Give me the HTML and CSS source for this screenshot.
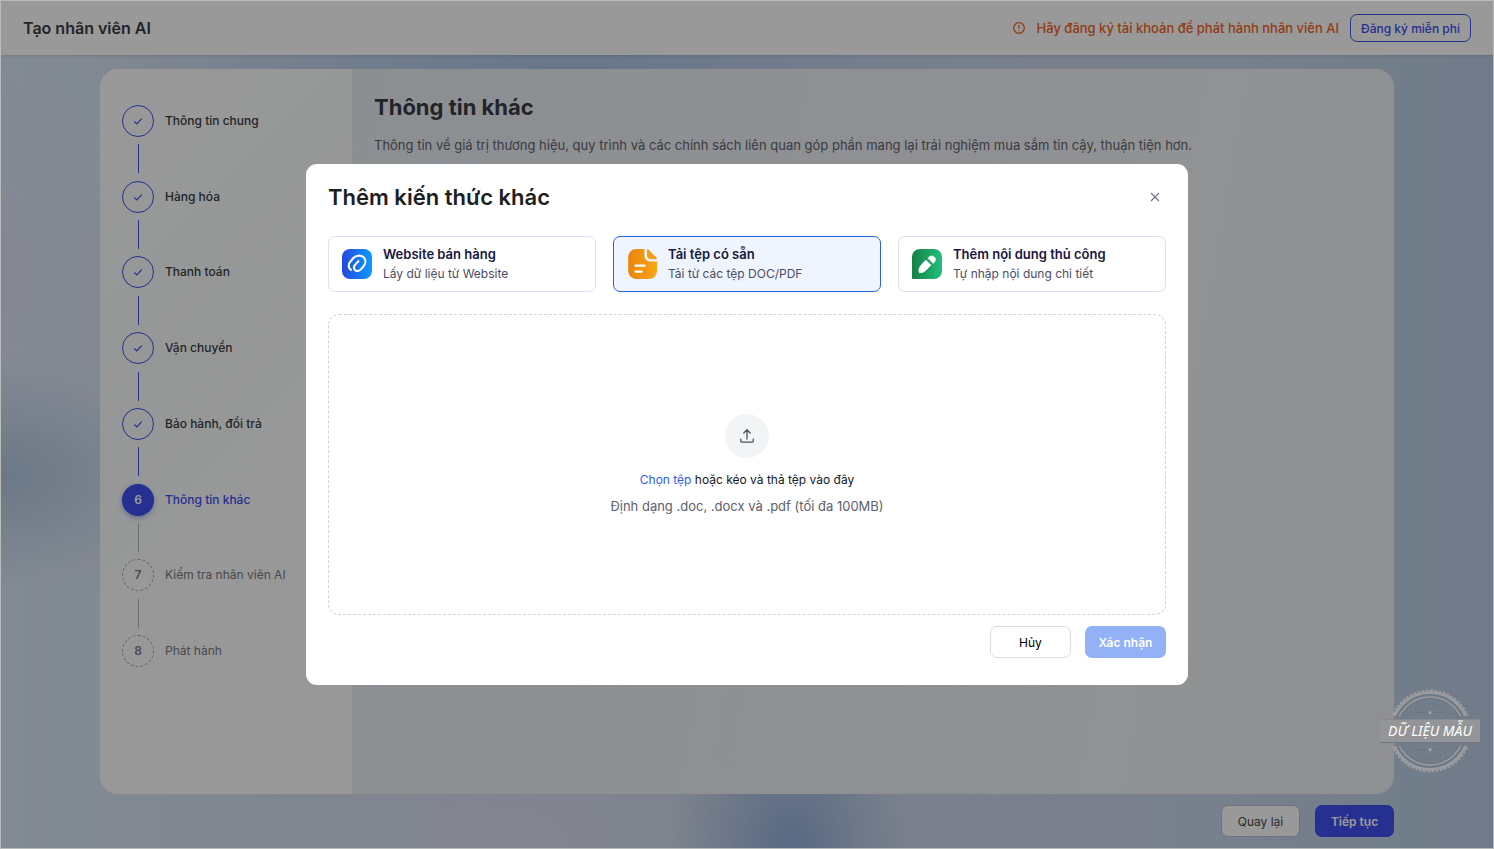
FILE: index.html
```html
<!DOCTYPE html>
<html lang="vi">
<head>
  <meta charset="UTF-8">
  <meta name="viewport" content="width=device-width, initial-scale=1">
  <title>Tạo nhân viên AI</title>
  <link rel="stylesheet" href="styles.css">
</head>
<body>
  <header class="topbar">
    <h1 class="topbar-title">Tạo nhân viên AI</h1>
    <div class="topbar-right">
      <svg class="warn-icon" viewBox="0 0 14 14" width="14" height="14">
        <circle cx="7" cy="7" r="5.3"/>
        <path d="M7 4v3.6M7 9.1v1"/>
      </svg>
      <span class="topbar-note">Hãy đăng ký tài khoản để phát hành nhân viên AI</span>
      <button type="button" class="btn-register">Đăng ký miễn phí</button>
    </div>
  </header>

  <main class="page">
    <div class="wizard">
      <nav class="sidebar">
        <ol class="steps">
          <li class="step done">
            <span class="step-dot"><svg viewBox="0 0 12 12" width="12" height="12"><path d="M2.2 6.4 4.8 8.8 9.8 3.6"/></svg></span>
            <a href="#" class="step-label">Thông tin chung</a>
          </li>
          <li class="step done">
            <span class="step-dot"><svg viewBox="0 0 12 12" width="12" height="12"><path d="M2.2 6.4 4.8 8.8 9.8 3.6"/></svg></span>
            <a href="#" class="step-label">Hàng hóa</a>
          </li>
          <li class="step done">
            <span class="step-dot"><svg viewBox="0 0 12 12" width="12" height="12"><path d="M2.2 6.4 4.8 8.8 9.8 3.6"/></svg></span>
            <a href="#" class="step-label">Thanh toán</a>
          </li>
          <li class="step done">
            <span class="step-dot"><svg viewBox="0 0 12 12" width="12" height="12"><path d="M2.2 6.4 4.8 8.8 9.8 3.6"/></svg></span>
            <a href="#" class="step-label">Vận chuyển</a>
          </li>
          <li class="step done">
            <span class="step-dot"><svg viewBox="0 0 12 12" width="12" height="12"><path d="M2.2 6.4 4.8 8.8 9.8 3.6"/></svg></span>
            <a href="#" class="step-label">Bảo hành, đổi trả</a>
          </li>
          <li class="step active">
            <span class="step-dot">6</span>
            <a href="#" class="step-label">Thông tin khác</a>
          </li>
          <li class="step">
            <span class="step-dot">7</span>
            <a href="#" class="step-label">Kiểm tra nhân viên AI</a>
          </li>
          <li class="step">
            <span class="step-dot">8</span>
            <a href="#" class="step-label">Phát hành</a>
          </li>
        </ol>
      </nav>
      <section class="content">
        <h2>Thông tin khác</h2>
        <p>Thông tin về giá trị thương hiệu, quy trình và các chính sách liên quan góp phần mang lại trải nghiệm mua sắm tin cậy, thuận tiện hơn.</p>
      </section>
    </div>
    <div class="page-actions">
      <button type="button" class="btn btn-back">Quay lại</button>
      <button type="button" class="btn btn-next">Tiếp tục</button>
    </div>
  </main>

  <div class="overlay">
    <div class="modal" role="dialog" aria-labelledby="modal-title">
      <div class="modal-header">
        <h2 id="modal-title">Thêm kiến thức khác</h2>
        <button type="button" class="modal-close" aria-label="Đóng">
          <svg viewBox="0 0 10 10" width="10" height="10"><path d="M1 1 9 9M9 1 1 9"/></svg>
        </button>
      </div>

      <div class="options">
        <button type="button" class="option">
          <svg class="option-icon" viewBox="0 0 30 30" width="30" height="30">
            <defs>
              <linearGradient id="blue" x1="0" y1="0" x2="1" y2="0">
                <stop offset="0" stop-color="#2547dd"/>
                <stop offset="1" stop-color="#0b9bff"/>
              </linearGradient>
            </defs>
            <rect width="30" height="30" rx="8" fill="url(#blue)"/>
            <path d="M9 20.8C6.4 19.4 6 15.6 8 13.2L11.2 9.2C13.6 6.4 18.8 5.6 21.6 8.2 24.2 10.8 23.8 14.6 21.6 17.2L18.8 20.4C17 22.4 14 22.6 12.6 20.6 11.4 18.8 12 17 13.2 15.6L16.4 12.2" fill="none" stroke="#fff" stroke-width="2.1" stroke-linecap="round" stroke-linejoin="round"/>
          </svg>
          <span class="option-text">
            <span class="option-title">Website bán hàng</span>
            <span class="option-sub">Lấy dữ liệu từ Website</span>
          </span>
        </button>
        <button type="button" class="option selected" aria-pressed="true">
          <svg class="option-icon" viewBox="0 0 30 30" width="30" height="30">
            <defs>
              <linearGradient id="orange" x1="0" y1="0" x2="1" y2="0">
                <stop offset="0" stop-color="#e8850c"/>
                <stop offset="1" stop-color="#fba518"/>
              </linearGradient>
            </defs>
            <path d="M9.5 0H17.5V6.5C17.5 10 20 12.5 23.5 12.5H30V22A8 8 0 0 1 22 30H9.5A8 8 0 0 1 1.2 22V8A8 8 0 0 1 9.5 0Z" fill="url(#orange)"/>
            <path d="M20 .6C20 0 20.8-.2 21.4.4L29.6 8.8C30.2 9.6 29.8 10.2 29 10.2H24C21.6 10.2 20 8.6 20 6.2Z" fill="#f69c16"/>
            <path d="M8.4 16.6H17.4M8.4 22.6H14.6" stroke="#fff" stroke-width="2.3" stroke-linecap="round"/>
          </svg>
          <span class="option-text">
            <span class="option-title">Tải tệp có sẵn</span>
            <span class="option-sub">Tải từ các tệp DOC/PDF</span>
          </span>
        </button>
        <button type="button" class="option">
          <svg class="option-icon" viewBox="0 0 30 30" width="30" height="30">
            <defs>
              <linearGradient id="green" x1="0" y1="0" x2="1" y2="0">
                <stop offset="0" stop-color="#148145"/>
                <stop offset="1" stop-color="#22c07b"/>
              </linearGradient>
            </defs>
            <path d="M8 0H22A8 8 0 0 1 30 8V22A8 8 0 0 1 22 30H1A1 1 0 0 1 0 29V8A8 8 0 0 1 8 0Z" fill="url(#green)"/>
            <path d="M13.8 11.2 18.8 16.2 13 22C11 23.4 8.6 23.8 7.4 23.4 6.6 21.8 7 19.2 8.6 17Z" fill="#fff" stroke="#fff" stroke-linejoin="round"/>
            <path d="M16 9.2C17.6 6.8 20.6 6.2 22.4 8 24.2 9.8 23.6 12.8 21.2 14.4Z" fill="#fff" stroke="#fff" stroke-width=".6" stroke-linejoin="round"/>
          </svg>
          <span class="option-text">
            <span class="option-title">Thêm nội dung thủ công</span>
            <span class="option-sub">Tự nhập nội dung chi tiết</span>
          </span>
        </button>
      </div>

      <div class="dropzone">
        <span class="upload-icon">
          <svg viewBox="0 0 16 16" width="16" height="16"><path d="M8 11V2M4.8 5 8 1.8 11.2 5M1.8 11.2V13.2Q1.8 14.2 2.8 14.2H13.2Q14.2 14.2 14.2 13.2V11.2"/></svg>
        </span>
        <p class="drop-main"><a href="#">Chọn tệp</a> hoặc kéo và thả tệp vào đây</p>
        <p class="drop-hint">Định dạng .doc, .docx và .pdf (tối đa 100MB)</p>
      </div>

      <div class="modal-actions">
        <button type="button" class="btn btn-cancel">Hủy</button>
        <button type="button" class="btn btn-confirm">Xác nhận</button>
      </div>
    </div>
  </div>

  <div class="stamp">
    <svg class="stamp-seal" viewBox="0 0 86 86" width="86" height="86">
      <defs>
        <clipPath id="seal-halves">
          <path d="M0 0H86V28H0ZM0 58H86V86H0Z"/>
        </clipPath>
      </defs>
      <g clip-path="url(#seal-halves)">
        <g fill="none" stroke="#999b9e">
          <circle cx="43" cy="43" r="38.5" stroke-width="3"/>
          <circle cx="43" cy="43" r="40.5" stroke-width="2" stroke-dasharray="2.6 1.64"/>
          <circle cx="43" cy="43" r="34" stroke-width="1.6"/>
          <circle cx="43" cy="43" r="27" stroke="#697079" stroke-width="1.4" stroke-dasharray="1.4 3.6"/>
        </g>
        <circle cx="43" cy="43" r="36.4" fill="none" stroke="#6b727b" stroke-width=".7"/>
        <circle cx="43" cy="43" r="32.4" fill="none" stroke="#6b727b" stroke-width=".7"/>
        <path d="M30 24.5H39M47 24.5H56M30 61.5H39M47 61.5H56" stroke="#6b727b"/>
        <circle cx="43" cy="24.5" r="1.5" fill="#a5a7aa"/>
        <circle cx="43" cy="61.5" r="1.5" fill="#a5a7aa"/>
      </g>
    </svg>
    <span class="stamp-ribbon">DỮ LIỆU MẪU</span>
  </div>
</body>
</html>
```
FILE: styles.css
```css
* {
  box-sizing: border-box;
}

body {
  margin: 0;
  min-height: 100vh;
  display: flex;
  flex-direction: column;
  border: 1px solid #b9bbba;
  font-family: Inter, sans-serif;
  font-size: 13px;
  line-height: 20px;
  color: #3a3d43;
  background-color: #cbd9f3;
  background-image:
    radial-gradient(ellipse 170px 110px at 0 56%, #b4c8e0, transparent),
    radial-gradient(ellipse 130px 220px at 0 32%, #dde2f4, transparent),
    radial-gradient(ellipse 480px 110px at 38% 8%, #adc6e8, transparent),
    radial-gradient(ellipse 120px 170px at 53% 100%, #9ab4dc 10%, transparent),
    radial-gradient(ellipse 200px 120px at 34% 100%, #dbdff0, transparent),
    linear-gradient(90deg, #d9e6f5 0%, #d3dbec 35%, #cbd7ea 75%, #c0d3e8 92%, #bccce6 100%);
}

h1, h2, p, ol {
  margin: 0;
  padding: 0;
}

button {
  font-family: inherit;
  cursor: pointer;
}

a {
  color: inherit;
  text-decoration: none;
}

svg {
  display: block;
  flex: none;
}

/* top bar */
.topbar {
  display: flex;
  align-items: center;
  justify-content: space-between;
  height: 54px;
  padding: 0 22px;
  background: #fff;
  box-shadow: 0 1px 3px rgba(0, 0, 0, 0.12);
}

.topbar-title {
  font-size: 16px;
  font-weight: 600;
}

.topbar-right {
  display: flex;
  align-items: center;
}

.warn-icon {
  margin-right: 11px;
  fill: none;
  stroke: #f26522;
  stroke-width: 1.3;
}

.topbar-note {
  margin-right: 11px;
  font-weight: 500;
  color: #f26522;
}

.btn-register {
  height: 28px;
  padding: 0 10px;
  border: 1px solid #4050f2;
  border-radius: 7px;
  background: #fff;
  color: #4050f2;
  font-size: 12px;
  font-weight: 500;
}

/* wizard */
.page {
  flex: 1;
  display: flex;
  flex-direction: column;
  width: 100%;
  max-width: 1294px;
  margin: 0 auto;
  padding-top: 14px;
}

.wizard {
  flex: 1;
  display: flex;
  border-radius: 18px;
  overflow: hidden;
}

.sidebar {
  width: 252px;
  padding: 36px 22px;
  background: linear-gradient(135deg, #fff 0%, #f9fcfb 40%, #fefefe 65%);
}

.steps {
  display: flex;
  flex-direction: column;
  height: 562px;
  list-style: none;
}

.step {
  flex: 1;
  display: grid;
  grid-template-columns: 32px 1fr;
  grid-template-rows: 32px 1fr;
  column-gap: 11px;
  align-items: center;
}

.step:last-child {
  flex: none;
}

.step:not(:last-child)::after {
  content: "";
  width: 1px;
  height: 29px;
  justify-self: center;
  background: #b4b6be;
}

.step-dot {
  display: flex;
  align-items: center;
  justify-content: center;
  width: 32px;
  height: 32px;
  border: 1px dashed #a8aab0;
  border-radius: 50%;
  font-size: 12px;
  font-weight: 600;
  color: #777a82;
}

.step-dot svg {
  fill: none;
  stroke: #4050f2;
  stroke-width: 1.2;
}

.step-label {
  font-size: 12px;
  color: #777a82;
}

.done .step-dot {
  border: 1px solid #4050f2;
}

.done .step-label {
  font-weight: 500;
  color: #3a3d43;
}

.step.done::after {
  background: #4050f2;
}

.active .step-dot {
  border: 0;
  background: #4050f2;
  color: #fff;
  box-shadow: 0 2px 5px rgba(64, 80, 242, 0.45);
}

.active .step-label {
  font-weight: 500;
  color: #4050f2;
}

.content {
  flex: 1;
  padding: 24px 22px;
  background: linear-gradient(100deg, #e9eff4, #eef0f6 45%, #f1f3f5 75%, #edf0f4);
}

.content h2 {
  margin-bottom: 14px;
  font-size: 22px;
  line-height: 28px;
  font-weight: 700;
}

.content p {
  color: #63666d;
}

.page-actions {
  display: flex;
  justify-content: flex-end;
  gap: 15px;
  padding: 11px 0;
}

.btn {
  height: 32px;
  border: 1px solid transparent;
  border-radius: 7px;
  font-size: 12px;
  font-weight: 400;
}

.btn-back {
  width: 79px;
  border-color: #bfbfc9;
  background: #fff;
  color: #4a4d54;
}

.btn-next {
  width: 79px;
  background: #4050f2;
  color: #fff;
  font-weight: 600;
}

/* modal */
.overlay {
  position: fixed;
  inset: 1px;
  display: flex;
  align-items: center;
  justify-content: center;
  background: rgba(0, 0, 0, 0.4);
}

.modal {
  width: 882px;
  max-width: 100%;
  padding: 18px 22px 27px;
  border-radius: 11px;
  background: #fff;
}

.modal-header {
  display: flex;
  align-items: center;
  justify-content: space-between;
  margin-bottom: 24px;
}

.modal-header h2 {
  font-size: 22px;
  line-height: 30px;
  font-weight: 600;
  color: #1c1e21;
}

.modal-close {
  padding: 6px;
  border: 0;
  background: none;
}

.modal-close svg {
  fill: none;
  stroke: #6b7280;
  stroke-width: 1.1;
}

.options {
  display: grid;
  grid-template-columns: repeat(3, 1fr);
  gap: 17px;
  margin-bottom: 22px;
}

.option {
  display: flex;
  align-items: center;
  gap: 11px;
  height: 56px;
  padding: 0 13px;
  border: 1px solid #dddff2;
  border-radius: 7px;
  background: #fff;
  text-align: left;
}

.option.selected {
  border-color: #2563eb;
  background: #eff5ff;
}

.option-title,
.option-sub {
  display: block;
  line-height: 19px;
}

.option-title {
  font-size: 13px;
  font-weight: 600;
  color: #17163f;
}

.option-sub {
  font-size: 12px;
  color: #4b4c68;
}

.dropzone {
  display: flex;
  flex-direction: column;
  align-items: center;
  justify-content: center;
  height: 301px;
  margin-bottom: 11px;
  border: 1px dashed #d1d2dc;
  border-radius: 11px;
}

.upload-icon {
  display: flex;
  align-items: center;
  justify-content: center;
  width: 44px;
  height: 44px;
  margin-bottom: 12px;
  border-radius: 50%;
  background: #f3f4f6;
}

.upload-icon svg {
  fill: none;
  stroke: #4b5563;
  stroke-width: 1.3;
  stroke-linejoin: round;
  stroke-linecap: round;
}

.drop-main {
  margin-bottom: 6px;
  font-size: 12px;
  color: #111827;
}

.drop-main a {
  color: #2f5cf0;
}

.drop-hint {
  color: #5b616c;
}

.modal-actions {
  display: flex;
  justify-content: flex-end;
  gap: 14px;
}

.btn-cancel {
  width: 81px;
  border-color: #dcdce0;
  background: #fff;
  color: #000;
}

.btn-confirm {
  width: 81px;
  background: #93b1f6;
  color: #fff;
  font-weight: 600;
}

/* sample data stamp */
.stamp {
  position: fixed;
  right: 14px;
  bottom: 75px;
  display: grid;
  place-items: center;
  width: 100px;
}

.stamp-seal,
.stamp-ribbon {
  grid-area: 1 / 1;
}

.stamp-ribbon {
  width: 100%;
  border-top: 1px solid #85888d;
  border-bottom: 1px solid #74787e;
  background: #949598;
  color: #fff;
  font: italic 14px/22px "Noto Sans", sans-serif;
  text-align: center;
}
```
